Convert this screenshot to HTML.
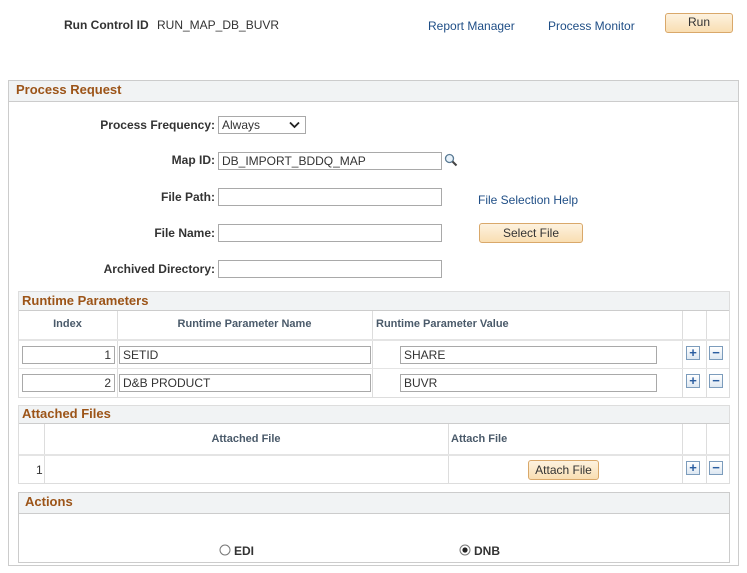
<!DOCTYPE html>
<html><head><style>
body{margin:0;width:747px;height:573px;background:#fff;font-family:"Liberation Sans",Arial,sans-serif;font-size:12px;color:#333;position:relative;overflow:hidden}
.a{position:absolute;white-space:nowrap}
.lbl{font-weight:bold;color:#333;text-align:right}
.lnk{color:#1f4e86}
.inp{position:absolute;border:1px solid #a9a9a9;background:#fff;box-sizing:border-box;height:18px;font-size:12px;line-height:16px;padding:0 3px;color:#333}
.btn{position:absolute;box-sizing:border-box;border:1px solid #d9a86a;border-radius:3px;background:linear-gradient(#fdf2df,#f9deb2);text-align:center;color:#333;font-size:12px}
.box{position:absolute;border:1px solid #ccc;box-sizing:border-box}
.hd{position:absolute;background:#f1f3f4;border-bottom:1px solid #ccc;box-sizing:border-box;color:#9c5418;font-weight:bold;font-size:13px}
.th{position:absolute;font-weight:bold;color:#4a5a6a;font-size:11px}
.vl{position:absolute;width:1px;background:#ddd}
.hl{position:absolute;height:2px;background:#e4e4e4}
.pm{position:absolute;width:14px;height:14px;box-sizing:border-box;border:1px solid #7c9cbc;background:linear-gradient(#fff,#dde7f1);color:#2a5da0;font-weight:bold;font-size:13px;line-height:11px;text-align:center}
</style></head><body>
<div class="a lbl" style="left:64px;top:18px">Run Control ID</div>
<div class="a" style="left:157px;top:18px">RUN_MAP_DB_BUVR</div>
<div class="a lnk" style="left:428px;top:19px">Report Manager</div>
<div class="a lnk" style="left:548px;top:19px">Process Monitor</div>
<div class="btn" style="left:665px;top:13px;width:68px;height:20px;line-height:17px">Run</div>

<div class="box" style="left:8px;top:80px;width:731px;height:486px"></div>
<div class="hd" style="left:9px;top:81px;width:729px;height:21px;padding:1px 0 0 7px">Process Request</div>

<div class="a lbl" style="left:0;width:215px;top:118px">Process Frequency:</div>
<div class="inp" style="left:218px;top:116px;width:88px;">Always<svg style="position:absolute;right:5px;top:4px" width="11" height="8"><path d="M1 1.5 L5.5 6 L10 1.5" fill="none" stroke="#222" stroke-width="1.8"/></svg></div>
<div class="a lbl" style="left:0;width:215px;top:153px">Map ID:</div>
<div class="inp" style="left:218px;top:152px;width:224px">DB_IMPORT_BDDQ_MAP</div>
<svg class="a" style="left:444px;top:153px" width="14" height="14"><circle cx="5.5" cy="5.5" r="4" fill="#e8f2fa" stroke="#5a7a94" stroke-width="1.3"/><line x1="8.5" y1="8.5" x2="12.5" y2="12.5" stroke="#444" stroke-width="2"/></svg>
<div class="a lbl" style="left:0;width:215px;top:190px">File Path:</div>
<div class="inp" style="left:218px;top:188px;width:224px"></div>
<div class="a lnk" style="left:478px;top:193px">File Selection Help</div>
<div class="a lbl" style="left:0;width:215px;top:226px">File Name:</div>
<div class="inp" style="left:218px;top:224px;width:224px"></div>
<div class="btn" style="left:479px;top:223px;width:104px;height:20px;line-height:18px">Select File</div>
<div class="a lbl" style="left:0;width:215px;top:262px">Archived Directory:</div>
<div class="inp" style="left:218px;top:260px;width:224px"></div>

<div class="box" style="left:18px;top:291px;width:712px;height:107px;border-color:#ddd"></div>
<div class="hd" style="left:19px;top:292px;width:710px;height:19px;padding:1px 0 0 3px">Runtime Parameters</div>
<div class="vl" style="left:117px;top:311px;height:86px"></div>
<div class="vl" style="left:372px;top:311px;height:86px"></div>
<div class="vl" style="left:682px;top:311px;height:86px"></div>
<div class="vl" style="left:706px;top:311px;height:86px"></div>
<div class="hl" style="left:19px;top:339px;width:710px"></div>
<div style="position:absolute;left:19px;top:368px;width:710px;height:1px;background:#e4e4e4"></div>
<div class="th" style="left:18px;width:99px;text-align:center;top:318px">Index</div>
<div class="th" style="left:117px;width:255px;text-align:center;top:318px">Runtime Parameter Name</div>
<div class="th" style="left:376px;top:318px">Runtime Parameter Value</div>
<div class="inp" style="left:22px;top:346px;width:93px;text-align:right">1</div>
<div class="inp" style="left:119px;top:346px;width:252px">SETID</div>
<div class="inp" style="left:400px;top:346px;width:257px">SHARE</div>
<div class="pm" style="left:686px;top:346px">+</div><div class="pm" style="left:709px;top:346px">&minus;</div>
<div class="inp" style="left:22px;top:374px;width:93px;text-align:right">2</div>
<div class="inp" style="left:119px;top:374px;width:252px">D&amp;B PRODUCT</div>
<div class="inp" style="left:400px;top:374px;width:257px">BUVR</div>
<div class="pm" style="left:686px;top:374px">+</div><div class="pm" style="left:709px;top:374px">&minus;</div>

<div class="box" style="left:18px;top:405px;width:712px;height:79px;border-color:#ddd"></div>
<div class="hd" style="left:19px;top:406px;width:710px;height:18px;padding:0 0 0 3px">Attached Files</div>
<div class="vl" style="left:44px;top:424px;height:59px"></div>
<div class="vl" style="left:448px;top:424px;height:59px"></div>
<div class="vl" style="left:682px;top:424px;height:59px"></div>
<div class="vl" style="left:706px;top:424px;height:59px"></div>
<div class="hl" style="left:19px;top:454px;width:710px"></div>
<div class="th" style="left:44px;width:404px;text-align:center;top:433px">Attached File</div>
<div class="th" style="left:451px;top:433px">Attach File</div>
<div class="a" style="left:36px;top:463px">1</div>
<div class="btn" style="left:528px;top:460px;width:71px;height:20px;line-height:18px">Attach File</div>
<div class="pm" style="left:686px;top:461px">+</div><div class="pm" style="left:709px;top:461px">&minus;</div>

<div class="box" style="left:18px;top:492px;width:712px;height:71px"></div>
<div class="hd" style="left:19px;top:493px;width:710px;height:21px;padding:1px 0 0 6px">Actions</div>
<svg class="a" style="left:219px;top:544px" width="12" height="12"><circle cx="6" cy="6" r="5" fill="#fff" stroke="#777"/></svg>
<div class="a lbl" style="left:234px;top:544px">EDI</div>
<svg class="a" style="left:459px;top:544px" width="12" height="12"><circle cx="6" cy="6" r="5" fill="#fff" stroke="#777"/><circle cx="6" cy="6" r="2.6" fill="#222"/></svg>
<div class="a lbl" style="left:474px;top:544px">DNB</div>
</body></html>
